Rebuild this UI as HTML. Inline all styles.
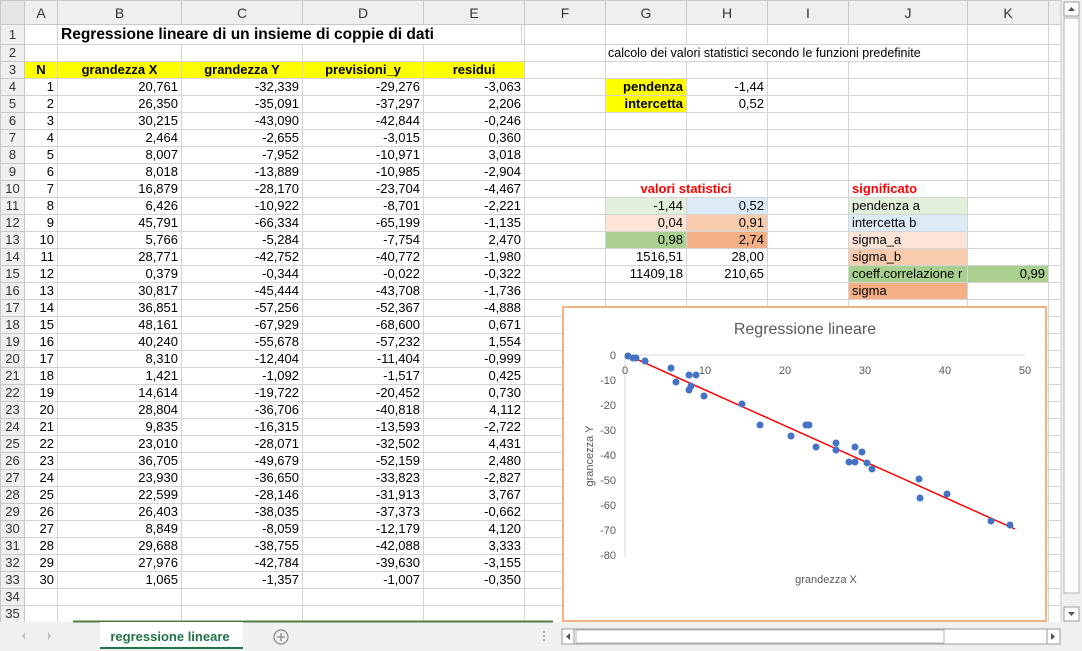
<!DOCTYPE html>
<html><head><meta charset="utf-8"><style>
*{margin:0;padding:0;box-sizing:border-box}
body{width:1082px;height:651px;overflow:hidden;background:#fff;font-family:"Liberation Sans",Arial,sans-serif;font-size:13px;color:#000;position:relative}
table{border-collapse:collapse;table-layout:fixed;position:absolute;left:0;top:0;width:1061px}
td{border:1px solid #d4d4d4;height:17px;padding:0 3px;white-space:nowrap;overflow:hidden;text-align:right;line-height:16px}
tr.h td{height:24px;background:#efefef;text-align:center;color:#333;font-size:14px;border-color:#c8c8c8}
td.rh{background:#efefef;text-align:center;color:#333;border-color:#c8c8c8;padding:0}
.y{background:#ffff00;font-weight:bold;text-align:center}
.l{text-align:left}
.b{font-weight:bold}
.r{color:#ff0000;font-weight:bold}
.abs{position:absolute;white-space:nowrap}
</style></head><body>
<table>
<colgroup><col style="width:24px"><col style="width:33px"><col style="width:124px"><col style="width:121px"><col style="width:121px"><col style="width:101px"><col style="width:81px"><col style="width:81px"><col style="width:81px"><col style="width:81px"><col style="width:119px"><col style="width:81px"><col style="width:13px"></colgroup>
<tr class="h"><td style="background:#e6e6e6"></td><td>A</td><td>B</td><td>C</td><td>D</td><td>E</td><td>F</td><td>G</td><td>H</td><td>I</td><td>J</td><td>K</td><td></td></tr>
<tr><td class="rh" style="height:20px">1</td><td></td><td></td><td></td><td></td><td></td><td></td><td></td><td></td><td></td><td></td><td></td><td></td></tr>
<tr><td class="rh">2</td><td></td><td></td><td></td><td></td><td></td><td></td><td></td><td></td><td></td><td></td><td></td><td></td></tr>
<tr><td class="rh">3</td><td class="y">N</td><td class="y">grandezza X</td><td class="y">grandezza Y</td><td class="y">previsioni_y</td><td class="y">residui</td><td></td><td></td><td></td><td></td><td></td><td></td><td></td></tr>
<tr><td class="rh">4</td><td>1</td><td>20,761</td><td>-32,339</td><td>-29,276</td><td>-3,063</td><td></td><td style="background:#ffff00" class="b">pendenza</td><td>-1,44</td><td></td><td></td><td></td><td></td></tr>
<tr><td class="rh">5</td><td>2</td><td>26,350</td><td>-35,091</td><td>-37,297</td><td>2,206</td><td></td><td style="background:#ffff00" class="b">intercetta</td><td>0,52</td><td></td><td></td><td></td><td></td></tr>
<tr><td class="rh">6</td><td>3</td><td>30,215</td><td>-43,090</td><td>-42,844</td><td>-0,246</td><td></td><td></td><td></td><td></td><td></td><td></td><td></td></tr>
<tr><td class="rh">7</td><td>4</td><td>2,464</td><td>-2,655</td><td>-3,015</td><td>0,360</td><td></td><td></td><td></td><td></td><td></td><td></td><td></td></tr>
<tr><td class="rh">8</td><td>5</td><td>8,007</td><td>-7,952</td><td>-10,971</td><td>3,018</td><td></td><td></td><td></td><td></td><td></td><td></td><td></td></tr>
<tr><td class="rh">9</td><td>6</td><td>8,018</td><td>-13,889</td><td>-10,985</td><td>-2,904</td><td></td><td></td><td></td><td></td><td></td><td></td><td></td></tr>
<tr><td class="rh">10</td><td>7</td><td>16,879</td><td>-28,170</td><td>-23,704</td><td>-4,467</td><td></td><td></td><td></td><td></td><td class="l r">significato</td><td></td><td></td></tr>
<tr><td class="rh">11</td><td>8</td><td>6,426</td><td>-10,922</td><td>-8,701</td><td>-2,221</td><td></td><td style="background:#e2efda">-1,44</td><td style="background:#ddebf7">0,52</td><td></td><td class="l" style="background:#e2efda">pendenza a</td><td></td><td></td></tr>
<tr><td class="rh">12</td><td>9</td><td>45,791</td><td>-66,334</td><td>-65,199</td><td>-1,135</td><td></td><td style="background:#fce4d6">0,04</td><td style="background:#f8cbad">0,91</td><td></td><td class="l" style="background:#ddebf7">intercetta b</td><td></td><td></td></tr>
<tr><td class="rh">13</td><td>10</td><td>5,766</td><td>-5,284</td><td>-7,754</td><td>2,470</td><td></td><td style="background:#a9d08e">0,98</td><td style="background:#f4b084">2,74</td><td></td><td class="l" style="background:#fce4d6">sigma_a</td><td></td><td></td></tr>
<tr><td class="rh">14</td><td>11</td><td>28,771</td><td>-42,752</td><td>-40,772</td><td>-1,980</td><td></td><td>1516,51</td><td>28,00</td><td></td><td class="l" style="background:#f8cbad">sigma_b</td><td></td><td></td></tr>
<tr><td class="rh">15</td><td>12</td><td>0,379</td><td>-0,344</td><td>-0,022</td><td>-0,322</td><td></td><td>11409,18</td><td>210,65</td><td></td><td class="l" style="background:#a9d08e">coeff.correlazione r</td><td style="background:#a9d08e">0,99</td><td></td></tr>
<tr><td class="rh">16</td><td>13</td><td>30,817</td><td>-45,444</td><td>-43,708</td><td>-1,736</td><td></td><td></td><td></td><td></td><td class="l" style="background:#f4b084">sigma</td><td></td><td></td></tr>
<tr><td class="rh">17</td><td>14</td><td>36,851</td><td>-57,256</td><td>-52,367</td><td>-4,888</td><td></td><td></td><td></td><td></td><td></td><td></td><td></td></tr>
<tr><td class="rh">18</td><td>15</td><td>48,161</td><td>-67,929</td><td>-68,600</td><td>0,671</td><td></td><td></td><td></td><td></td><td></td><td></td><td></td></tr>
<tr><td class="rh">19</td><td>16</td><td>40,240</td><td>-55,678</td><td>-57,232</td><td>1,554</td><td></td><td></td><td></td><td></td><td></td><td></td><td></td></tr>
<tr><td class="rh">20</td><td>17</td><td>8,310</td><td>-12,404</td><td>-11,404</td><td>-0,999</td><td></td><td></td><td></td><td></td><td></td><td></td><td></td></tr>
<tr><td class="rh">21</td><td>18</td><td>1,421</td><td>-1,092</td><td>-1,517</td><td>0,425</td><td></td><td></td><td></td><td></td><td></td><td></td><td></td></tr>
<tr><td class="rh">22</td><td>19</td><td>14,614</td><td>-19,722</td><td>-20,452</td><td>0,730</td><td></td><td></td><td></td><td></td><td></td><td></td><td></td></tr>
<tr><td class="rh">23</td><td>20</td><td>28,804</td><td>-36,706</td><td>-40,818</td><td>4,112</td><td></td><td></td><td></td><td></td><td></td><td></td><td></td></tr>
<tr><td class="rh">24</td><td>21</td><td>9,835</td><td>-16,315</td><td>-13,593</td><td>-2,722</td><td></td><td></td><td></td><td></td><td></td><td></td><td></td></tr>
<tr><td class="rh">25</td><td>22</td><td>23,010</td><td>-28,071</td><td>-32,502</td><td>4,431</td><td></td><td></td><td></td><td></td><td></td><td></td><td></td></tr>
<tr><td class="rh">26</td><td>23</td><td>36,705</td><td>-49,679</td><td>-52,159</td><td>2,480</td><td></td><td></td><td></td><td></td><td></td><td></td><td></td></tr>
<tr><td class="rh">27</td><td>24</td><td>23,930</td><td>-36,650</td><td>-33,823</td><td>-2,827</td><td></td><td></td><td></td><td></td><td></td><td></td><td></td></tr>
<tr><td class="rh">28</td><td>25</td><td>22,599</td><td>-28,146</td><td>-31,913</td><td>3,767</td><td></td><td></td><td></td><td></td><td></td><td></td><td></td></tr>
<tr><td class="rh">29</td><td>26</td><td>26,403</td><td>-38,035</td><td>-37,373</td><td>-0,662</td><td></td><td></td><td></td><td></td><td></td><td></td><td></td></tr>
<tr><td class="rh">30</td><td>27</td><td>8,849</td><td>-8,059</td><td>-12,179</td><td>4,120</td><td></td><td></td><td></td><td></td><td></td><td></td><td></td></tr>
<tr><td class="rh">31</td><td>28</td><td>29,688</td><td>-38,755</td><td>-42,088</td><td>3,333</td><td></td><td></td><td></td><td></td><td></td><td></td><td></td></tr>
<tr><td class="rh">32</td><td>29</td><td>27,976</td><td>-42,784</td><td>-39,630</td><td>-3,155</td><td></td><td></td><td></td><td></td><td></td><td></td><td></td></tr>
<tr><td class="rh">33</td><td>30</td><td>1,065</td><td>-1,357</td><td>-1,007</td><td>-0,350</td><td></td><td></td><td></td><td></td><td></td><td></td><td></td></tr>
<tr><td class="rh">34</td><td></td><td></td><td></td><td></td><td></td><td></td><td></td><td></td><td></td><td></td><td></td><td></td></tr>
<tr><td class="rh">35</td><td></td><td></td><td></td><td></td><td></td><td></td><td></td><td></td><td></td><td></td><td></td><td></td></tr>
</table>

<div class="abs b" style="left:58px;top:25px;height:19px;line-height:19px;font-size:15.5px;background:#fff;padding:0 3px;width:464px;border-right:1px solid #d4d4d4">Regressione lineare di un insieme di coppie di dati</div>
<div class="abs" style="left:606px;top:45px;height:16px;line-height:16px;font-size:12.5px;background:#fff;padding-left:2px;width:355px">calcolo dei valori statistici secondo le funzioni predefinite</div>
<div class="abs r" style="left:606px;top:181px;height:16px;line-height:16px;background:#fff;width:160px;text-align:center">valori statistici</div>

<svg style="position:absolute;left:0;top:0" width="1082" height="651">
<rect x="563" y="307" width="483" height="314" fill="#fff" stroke="#f4b183" stroke-width="2"/>
<text x="805" y="334" font-size="16" fill="#595959" text-anchor="middle" font-family="Liberation Sans,sans-serif">Regressione lineare</text>
<line x1="625" y1="355" x2="1025" y2="355" stroke="#d9d9d9"/>
<line x1="625" y1="355" x2="625" y2="557" stroke="#d9d9d9"/>
<g font-size="11" fill="#595959" text-anchor="end" font-family="Liberation Sans,sans-serif">
<text x="616" y="359">0</text><text x="616" y="384">-10</text><text x="616" y="409">-20</text><text x="616" y="434">-30</text><text x="616" y="459">-40</text><text x="616" y="484">-50</text><text x="616" y="509">-60</text><text x="616" y="534">-70</text><text x="616" y="559">-80</text>
</g>
<g font-size="11" fill="#595959" text-anchor="middle" font-family="Liberation Sans,sans-serif">
<text x="625" y="374">0</text><text x="705" y="374">10</text><text x="785" y="374">20</text><text x="865" y="374">30</text><text x="945" y="374">40</text><text x="1025" y="374">50</text>
<text x="826" y="583">grandezza X</text>
<text transform="translate(593,456) rotate(-90)">grancezza Y</text>
</g>
<line x1="625" y1="354" x2="1015" y2="529" stroke="#ff0000" stroke-width="1.5"/>
<g fill="#4472c4">
<circle cx="791" cy="436" r="3.5"/><circle cx="836" cy="443" r="3.5"/><circle cx="867" cy="463" r="3.5"/><circle cx="645" cy="361" r="3.5"/><circle cx="689" cy="375" r="3.5"/><circle cx="689" cy="390" r="3.5"/><circle cx="760" cy="425" r="3.5"/><circle cx="676" cy="382" r="3.5"/><circle cx="991" cy="521" r="3.5"/><circle cx="671" cy="368" r="3.5"/><circle cx="855" cy="462" r="3.5"/><circle cx="628" cy="356" r="3.5"/><circle cx="872" cy="469" r="3.5"/><circle cx="920" cy="498" r="3.5"/><circle cx="1010" cy="525" r="3.5"/><circle cx="947" cy="494" r="3.5"/><circle cx="691" cy="386" r="3.5"/><circle cx="636" cy="358" r="3.5"/><circle cx="742" cy="404" r="3.5"/><circle cx="855" cy="447" r="3.5"/><circle cx="704" cy="396" r="3.5"/><circle cx="809" cy="425" r="3.5"/><circle cx="919" cy="479" r="3.5"/><circle cx="816" cy="447" r="3.5"/><circle cx="806" cy="425" r="3.5"/><circle cx="836" cy="450" r="3.5"/><circle cx="696" cy="375" r="3.5"/><circle cx="862" cy="452" r="3.5"/><circle cx="849" cy="462" r="3.5"/><circle cx="633" cy="358" r="3.5"/>
</g>
<rect x="1061" y="0" width="21" height="622" fill="#f0f0f0"/>
<line x1="1061" y1="0" x2="1061" y2="622" stroke="#c8c8c8"/>
<rect x="1064" y="2" width="15" height="14" fill="#fff" stroke="#9a9a9a"/>
<path d="M1068 11 L1071.5 7 L1075 11Z" fill="#555"/>
<rect x="1064" y="18" width="15" height="575" fill="#fff" stroke="#b5b5b5"/>
<rect x="1064" y="607" width="15" height="14" fill="#fff" stroke="#9a9a9a"/>
<path d="M1068 612 L1071.5 616 L1075 612Z" fill="#555"/>
<rect x="0" y="622" width="1082" height="29" fill="#f0f0f0"/>
<line x1="73" y1="621.5" x2="553" y2="621.5" stroke="#4f7f3c" stroke-width="2"/>
<rect x="100" y="622" width="143" height="26" fill="#fff"/>
<line x1="100" y1="648" x2="243" y2="648" stroke="#217346" stroke-width="2"/>
<text x="170" y="641" font-size="13" font-weight="bold" fill="#217346" text-anchor="middle" font-family="Liberation Sans,sans-serif">regressione lineare</text>
<path d="M25 632 L22 636 L25 640Z M48 632 L51 636 L48 640Z" fill="#c0c0c0"/>
<circle cx="281" cy="637" r="7" fill="none" stroke="#888" stroke-width="1.2"/>
<path d="M277 637 H285 M281 633 V641" stroke="#888" stroke-width="1.3"/>
<g fill="#aaa"><rect x="543" y="631" width="2" height="2"/><rect x="543" y="635" width="2" height="2"/><rect x="543" y="639" width="2" height="2"/></g>
<rect x="562" y="629" width="498" height="15" fill="#fff" stroke="#9a9a9a"/>
<rect x="562" y="629" width="12" height="15" fill="#fff" stroke="#9a9a9a"/>
<path d="M570 633 L566 636.5 L570 640Z" fill="#555"/>
<rect x="576" y="630" width="368" height="13" fill="#fff" stroke="#b5b5b5"/>
<rect x="1047" y="629" width="13" height="15" fill="#fff" stroke="#9a9a9a"/>
<path d="M1051 633 L1055 636.5 L1051 640Z" fill="#555"/>
</svg>
</body></html>
